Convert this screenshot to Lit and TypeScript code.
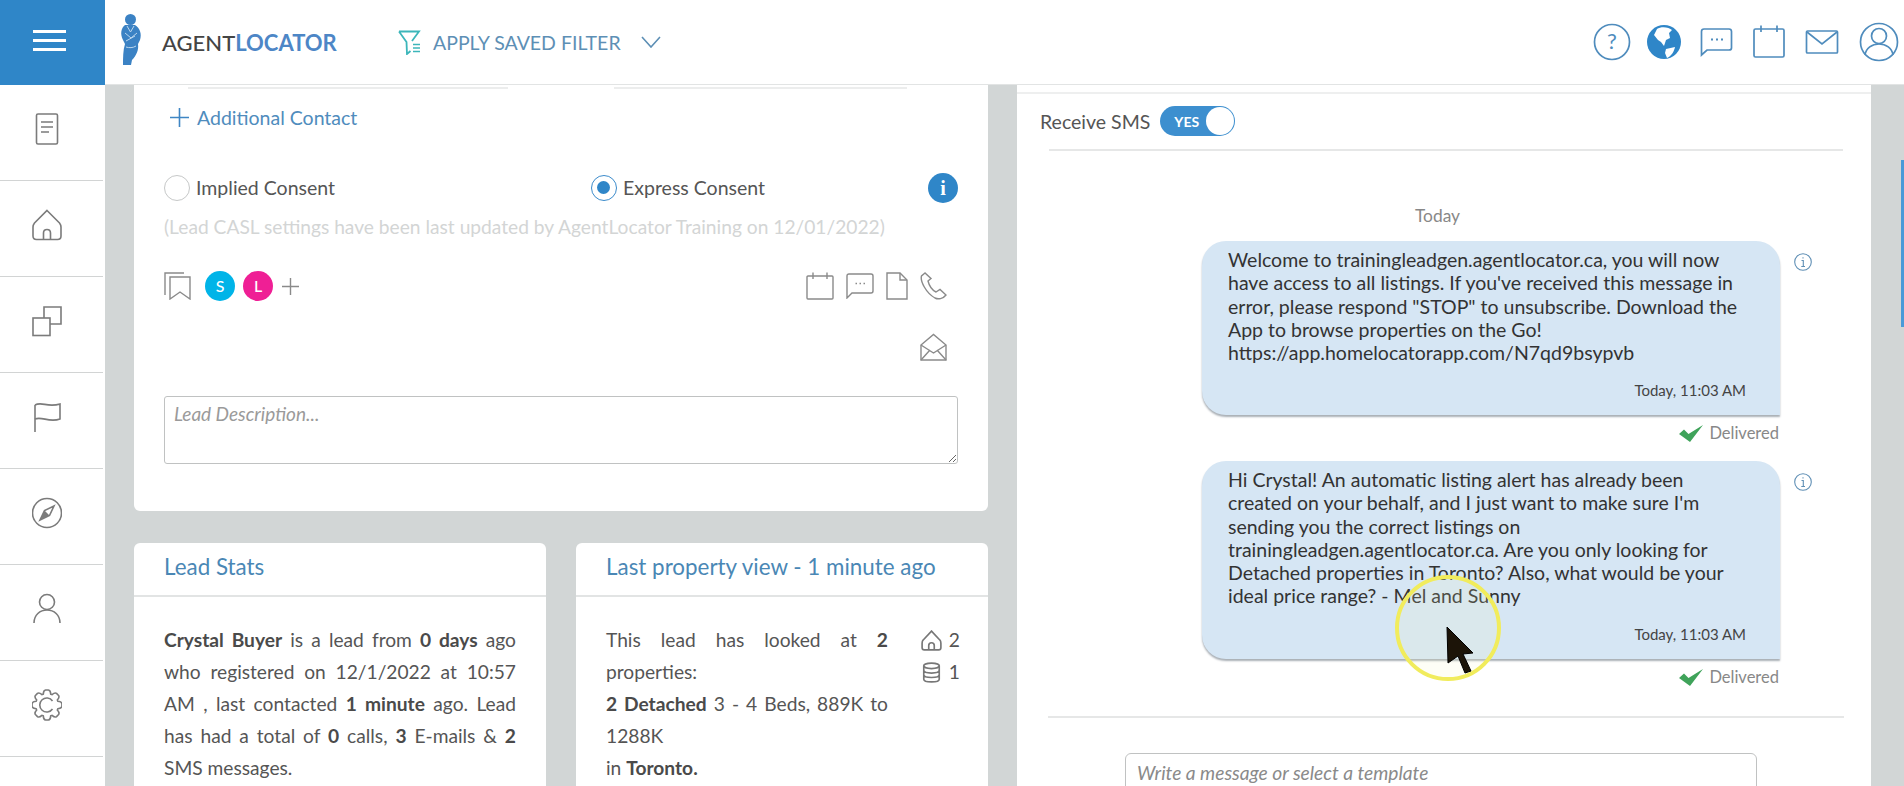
import { LitElement, html, css, svg } from "lit";
import { customElement } from "lit/decorators.js";

function gearPath(cx: number, cy: number, ro: number, ri: number, n: number) {
  const pts: string[] = [];
  const step = (Math.PI * 2) / n;
  for (let i = 0; i < n; i++) {
    const a = i * step - Math.PI / 2;
    const p = (r: number, t: number) =>
      `${(cx + r * Math.cos(a + t * step)).toFixed(2)} ${(cy + r * Math.sin(a + t * step)).toFixed(2)}`;
    pts.push(`${i === 0 ? "M" : "L"}${p(ri, -0.42)}`, `C${p(ro, -0.3)} ${p(ro, -0.2)} ${p(ro, -0.12)}`, `L${p(ro, 0.12)}`, `C${p(ro, 0.2)} ${p(ro, 0.3)} ${p(ri, 0.42)}`);
  }
  return pts.join(" ") + " Z";
}

const side = [
  svg`<svg width="30" height="32" viewBox="0 0 30 32"><rect x="4.500" y="1" width="21" height="30" rx="1.500"/><path d="M9 9h12M9 14h12M9 19h8"/></svg>`,
  svg`<svg width="30" height="32" viewBox="0 0 30 32"><path d="M15 1.500 L27.500 14 Q29 16 29 18 V27 Q29 30.500 25.500 30.500 H4.500 Q1 30.500 1 27 V18 Q1 16 2.500 14 Z"/><path d="M11.500 30.500 V24 Q11.500 20.500 15 20.500 Q18.500 20.500 18.500 24 V30.500"/></svg>`,
  svg`<svg width="30" height="32" viewBox="0 0 30 32"><rect x="1" y="13" width="17" height="17.500"/><path d="M12 13 V2 H29 V19 H18"/></svg>`,
  svg`<svg width="30" height="32" viewBox="0 0 30 32"><path d="M3 31 V4"/><path d="M3 4 C10 0 15 7 28 3 V18 C17 22 10 15 3 18"/></svg>`,
  svg`<svg width="30" height="32" viewBox="0 0 30 32"><circle cx="15" cy="16" r="14.500"/><path d="M22 9 L17.500 18.500 L8 23 L12.500 13.500 Z"/><path d="M12.500 13.500 L8 23 L17.500 18.500 Z" class="fill"/></svg>`,
  svg`<svg width="30" height="32" viewBox="0 0 30 32"><circle cx="15" cy="9" r="7.500"/><path d="M2 30 C2 22 8 17 15 17 C22 17 28 22 28 30"/></svg>`,
  svg`<svg width="30" height="32" viewBox="0 0 30 32"><path d="${gearPath(15, 16, 15, 11.5, 8)}"/><path d="M20.500 12 A7 7 0 1 0 20.500 20"/></svg>`,
];

@customElement("app-root")
export class AppRoot extends LitElement {
  static styles = css`
    :host { display: block; width: 1904px; height: 786px; overflow: hidden; position: relative; font-family: Lato, "Open Sans", sans-serif; color: #555; background: #d2d6d6; }
    * { box-sizing: border-box; }
    .shell { display: grid; grid-template-columns: 105px 1fr; grid-template-rows: 85px 1fr; height: 786px; }
    header { grid-column: 1 / 3; display: flex; align-items: center; background: #fff; border-bottom: 1px solid #e2e4e4; }
    .burger { width: 105px; height: 85px; background: #2f86c8; display: flex; flex-direction: column; gap: 6px; padding: 30px 0 0 33px; }
    .burger i { display: block; width: 33px; height: 3px; background: #fff; }
    .logo { margin-left: 15px; display: flex; align-items: center; }
    .logo svg { display: block; margin-top: -4px; }
    .brand { margin-left: 20px; font-size: 22px; font-weight: 500; color: #444; width: 236px; }
    .brand b { color: #4d86c6; font-weight: 700; }
    .filter { display: flex; align-items: center; font-size: 19.500px; color: #5d8fb5; }
    .filter span { margin: 0 20px 0 11px; }
    .top-icons { margin-left: auto; display: flex; gap: 2.600px; align-items: center; }
    .top-icons svg { display: block; fill: none; stroke: #4f8cbd; stroke-width: 1.7; }
    .top-icons svg:last-child { margin-left: 4.400px; }
    aside { background: #fff; padding-right: 2px; overflow: hidden; }
    .row { height: 96px; border-bottom: 1.500px solid #d2d4d4; display: flex; align-items: center; padding: 0 0 7px 32px; }
    .row svg { fill: none; stroke: #7b7b7b; stroke-width: 1.6; display: block; }
    .row svg .fill { fill: #7b7b7b; stroke: none; }
    main { display: grid; grid-template-columns: 854px 854px; gap: 29px; padding: 0 33px 0 29px; overflow: hidden; align-items: start; }
    .left { display: flex; flex-direction: column; gap: 32px; }
    .card { background: #fff; height: 426px; border-radius: 0 0 6px 6px; padding: 2px 30px 0; display: flex; flex-direction: column; }
    .frag { display: flex; gap: 106px; margin-left: 24px; height: 2px; }
    .frag i { display: block; height: 2px; background: #eceded; width: 320px; }
    .frag i + i { width: 293px; }
    .addl { display: flex; align-items: center; gap: 8px; height: 24px; margin: 16px 0 0 6px; font-size: 19.500px; color: #4f8cbd; }
    .addl svg { display: block; fill: none; stroke: #3f86c4; stroke-width: 1.6; }
    .radios { display: flex; align-items: center; height: 30px; margin-top: 44px; font-size: 19.500px; color: #555; }
    .radio { display: flex; align-items: center; gap: 6px; }
    .radio > span:last-child { margin-top: -2px; }
    .radio.first { width: 427px; }
    .circ { width: 26px; height: 26px; border-radius: 50%; border: 1.500px solid #c6c8c8; background: #fff; display: block; }
    .circ.on { border: 1.500px solid #3b8bcb; padding: 5px; }
    .circ.on i { display: block; width: 13px; height: 13px; border-radius: 50%; background: #2f86c8; }
    .info { margin-left: auto; width: 30px; height: 30px; border-radius: 50%; background: #2f86c8; color: #fff; font: 700 20px/30px "Liberation Serif", serif; text-align: center; }
    .casl { margin-top: 12px; height: 24px; line-height: 24px; font-size: 19.200px; color: #d3d5d5; white-space: nowrap; }
    .tools { display: flex; align-items: center; height: 30px; margin-top: 32px; }
    .tools svg, .env svg { display: block; fill: none; stroke: #8a8a8a; stroke-width: 1.4; }
    .dot { width: 30px; height: 30px; border-radius: 50%; color: #fff; text-align: center; font-size: 16px; line-height: 30px; font-weight: 500; }
    .dot.s { background: #00b4e8; margin-left: 14px; }
    .dot.l { background: #ef1f95; margin-left: 8px; }
    .more { margin-left: 9px; }
    .acts { margin-left: auto; margin-right: 11px; display: flex; gap: 12px; align-items: center; }
    .env { display: flex; justify-content: flex-end; margin: 32px 11px 0 0; height: 28px; }
    textarea { display: block; margin-top: 35px; width: 794px; height: 68px; border: 1.500px solid #c0c2c2; border-radius: 3px; padding: 5px 9px; font: italic 19px Lato, sans-serif; outline: none; background: #fff; }
    textarea::placeholder { color: #9a9a9a; opacity: 1; }
    .stats { display: grid; grid-template-columns: 412px 412px; gap: 30px; }
    .stat { background: #fff; border-radius: 6px 6px 0 0; height: 260px; }
    .stat h3 { margin: 0; height: 54px; padding-left: 30px; font-size: 22.400px; line-height: 48px; font-weight: 400; color: #4a87b5; border-bottom: 2px solid #e2e4e4; white-space: nowrap; }
    .body { padding: 27px 28px 0 30px; font-size: 19.200px; line-height: 32px; color: #555; display: flex; justify-content: space-between; }
    .body b { font-weight: 700; color: #4a4a4a; }
    .line { text-align: justify; text-align-last: justify; white-space: nowrap; }
    .line.end { text-align-last: left; }
    .para { width: 352px; }
    .para.short { width: 282px; }
    .counts { display: grid; grid-template-columns: auto auto; column-gap: 7px; height: 64px; }
    .counts svg { display: block; fill: none; stroke: #777; stroke-width: 1.5; margin-top: 6px; }
    .right { background: #fff; height: 701px; position: relative; padding-top: 7px; }
    .faint { height: 2px; background: #eeefef; }
    .sms { display: flex; align-items: center; height: 30px; margin: 12px 0 0 23px; font-size: 19.500px; color: #555; gap: 10px; }
    .toggle { width: 75px; height: 30px; border-radius: 15px; background: #3d8fcf; display: flex; align-items: center; justify-content: space-between; padding: 0 1px 0 14px; color: #fff; font-size: 14px; font-weight: 700; }
    .toggle i { display: block; width: 28px; height: 28px; border-radius: 50%; background: #fff; }
    .rule { height: 2px; background: #e6e7e7; }
    .rule.a { margin: 13px 28px 0 32px; }
    .rule.b { margin: 26px 27px 0 31px; }
    .today { text-align: center; font-size: 17.400px; color: #888; line-height: 20px; margin: 55px 0 15px; width: 841px; }
    .msg { display: flex; justify-content: flex-end; align-items: flex-start; gap: 14px; padding-right: 59px; }
    .msg svg { display: block; margin-top: 12px; fill: none; stroke: #5f8fb5; stroke-width: 1.1; }
    .bubble { width: 578px; background: #d6e6f4; border-radius: 24px 24px 0 24px; box-shadow: 0 2px 2px #a9afb5; padding: 7px 26px 0; font-size: 19.500px; line-height: 23.300px; color: #333; white-space: nowrap; }
    .bubble.one { height: 174px; }
    .bubble.two { height: 198px; }
    .time { text-align: right; font-size: 15px; line-height: 20px; margin: 16px 8px 0 0; color: #444; }
    .dlv { display: flex; justify-content: flex-end; align-items: center; gap: 6px; height: 26px; margin: 5px 92px 15px 0; font-size: 16.500px; color: #888; }
    .dlv svg { display: block; }
    .input { margin: 35px 114px 0 108px; height: 60px; border: 1.500px solid #c0c2c2; border-radius: 6px 6px 0 0; padding: 7px 11px; font-style: italic; font-size: 19.200px; color: #8a8a8a; white-space: nowrap; }
    .thumb { position: absolute; left: 1901px; top: 160px; width: 3px; height: 167px; background: #4a9ad8; }
    .ring { position: absolute; left: 1395px; top: 575px; width: 106px; height: 106px; border-radius: 50%; border: 4px solid #f1ec5c; background: rgba(250, 248, 190, 0.14); }
    .arrow { position: absolute; left: 1444px; top: 625px; display: block; }
  `;

  private infoIcon() {
    return svg`<svg width="18" height="18" viewBox="0 0 18 18"><circle cx="9" cy="9" r="8.300"/><path d="M7.500 7.500H9.300V13.500M7.300 13.500H11M9 4.300V5.500"/></svg>`;
  }

  private check() {
    return svg`<svg width="24" height="17" viewBox="0 0 24 17"><path d="M0 9 L5 4.500 L9.500 9 L24 0 L11 17 Z" fill="#3fa35a"/></svg>`;
  }

  render() {
    return html`
      <div class="shell">
        <header>
          <div class="burger"><i></i><i></i><i></i></div>
          <div class="logo">
            <svg width="22" height="52" viewBox="0 0 22 52">
              <circle cx="10.500" cy="5.500" r="5.500" fill="#3b82c4"/>
              <path d="M5 11 L15 11 C20 14 22 20 20 26 L18 30 C19 36 16 42 12 46 L11 51 H3 C3 44 3 36 5 30 L3 26 C0 20 1 14 5 11 Z" fill="#3b82c4"/>
              <path d="M7 12 L10.500 18 L14 12 M5 19 L11 24 L17 19 M6 27 L15 22 M6 33 C9 34 13 34 16 32" fill="none" stroke="#bcd7ee" stroke-width="1"/>
            </svg>
            <div class="brand">AGENT<b>LOCATOR</b></div>
          </div>
          <div class="filter">
            <svg width="24" height="25" viewBox="0 0 24 25" fill="none" stroke="#3cb6ba" stroke-width="1.800" style="display:block"><path d="M1 1.500 H21 L14 11 M1 1.500 L8.500 12 L9 24 L12.500 21"/><path d="M15 14.500H22M15 18H22M15 21.500H22" stroke-width="1.600"/></svg>
            <span>APPLY SAVED FILTER</span>
            <svg width="20" height="12" viewBox="0 0 20 12" fill="none" stroke="#5d8fb5" stroke-width="1.600" style="display:block"><path d="M1 1 L10 11 L19 1"/></svg>
          </div>
          <div class="top-icons">
            <svg width="50" height="40" viewBox="0 0 50 40"><circle cx="25" cy="20" r="17.500"/><text x="25" y="27" text-anchor="middle" font-size="22" fill="#4f8cbd" stroke="none" font-family="Lato">?</text></svg>
            <svg width="50" height="40" viewBox="0 0 50 40"><circle cx="25" cy="20" r="17" fill="#2f86c8" stroke="none"/><path d="M18 7 C22 4 30 5 33 8 L30 11 L31 16 L27 18 L25 24 L22 20 L19 18 L15 13 Z" fill="#fff" stroke="none"/><path d="M27 27 L36 25 C35 30 32 34 28 36 L26 31 Z" fill="#fff" stroke="none"/></svg>
            <svg width="50" height="40" viewBox="0 0 50 40"><path d="M12 7 H37 Q39.500 7 39.500 9.500 V26 Q39.500 28 37 28 H15 L9.500 33 V9.500 Q9.500 7 12 7 Z"/><path d="M19 17.500h2M24 17.500h2M29 17.500h2" stroke-width="2"/></svg>
            <svg width="50" height="40" viewBox="0 0 50 40"><rect x="10" y="7" width="30" height="28" rx="1.500"/><path d="M17 3.500V10M33 3.500V10"/></svg>
            <svg width="50" height="40" viewBox="0 0 50 40"><rect x="9.500" y="9" width="31" height="22" rx="1"/><path d="M10 10 L25 22 L40 10"/></svg>
            <svg width="50" height="40" viewBox="0 0 50 40"><circle cx="25" cy="20" r="18.500"/><circle cx="25" cy="14" r="7.500"/><path d="M11 33 C12 26 18 22 25 22 C32 22 38 26 39 33"/></svg>
          </div>
        </header>
        <aside>${side.map((s) => html`<div class="row">${s}</div>`)}</aside>
        <main>
          <div class="left">
            <section class="card">
              <div class="frag"><i></i><i></i></div>
              <div class="addl">
                <svg width="19" height="19" viewBox="0 0 19 19"><path d="M9.500 0V19M0 9.500H19"/></svg>
                <span>Additional Contact</span>
              </div>
              <div class="radios">
                <div class="radio first"><span class="circ"></span><span>Implied Consent</span></div>
                <div class="radio"><span class="circ on"><i></i></span><span>Express Consent</span></div>
                <div class="info">i</div>
              </div>
              <div class="casl">(Lead CASL settings have been last updated by AgentLocator Training on 12/01/2022)</div>
              <div class="tools">
                <svg width="27" height="28" viewBox="0 0 27 28"><path d="M1 23 V1 H20"/><path d="M6 5 H26 V27 L16 20 L6 27 Z"/></svg>
                <div class="dot s">S</div>
                <div class="dot l">L</div>
                <svg class="more" width="17" height="17" viewBox="0 0 17 17"><path d="M8.500 0V17M0 8.500H17"/></svg>
                <div class="acts">
                  <svg width="28" height="28" viewBox="0 0 28 28"><rect x="1" y="4" width="26" height="23" rx="1"/><path d="M7 0.500V7M21 0.500V7"/></svg>
                  <svg width="28" height="26" viewBox="0 0 28 26"><path d="M3 1 H25 Q27 1 27 3 V18 Q27 20 25 20 H6 L1 25 V3 Q1 1 3 1 Z"/><path d="M9.500 10.500h1.500M13.500 10.500h1.500M17.500 10.500h1.500" stroke-width="1.600"/></svg>
                  <svg width="22" height="28" viewBox="0 0 22 28"><path d="M1 1 H14 L21 8 V27 H1 Z"/><path d="M14 1 V8 H21"/></svg>
                  <svg width="27" height="28" viewBox="0 0 27 28"><path d="M5 1 L1.500 4 C0 9 6 21 15 26 C18 27.500 23 27 26 23 L20 17.500 L16 20 C12 18 9 13 8 9 L11 6.500 Z"/></svg>
                </div>
              </div>
              <div class="env">
                <svg width="27" height="28" viewBox="0 0 27 28"><path d="M1 12 L13.500 1.500 L26 12 V27 H1 Z"/><path d="M1 12 L13.500 20 L26 12M1 27 L10 17M26 27 L17 17"/></svg>
              </div>
              <textarea placeholder="Lead Description..."></textarea>
            </section>
            <div class="stats">
              <section class="stat">
                <h3>Lead Stats</h3>
                <div class="body">
                  <div class="para">
                    <div class="line"><b>Crystal Buyer</b> is a lead from <b>0 days</b> ago</div>
                    <div class="line">who registered on 12/1/2022 at 10:57</div>
                    <div class="line">AM , last contacted <b>1 minute</b> ago. Lead</div>
                    <div class="line">has had a total of <b>0</b> calls, <b>3</b> E-mails &amp; <b>2</b></div>
                    <div class="line end">SMS messages.</div>
                  </div>
                </div>
              </section>
              <section class="stat">
                <h3>Last property view - 1 minute ago</h3>
                <div class="body">
                  <div class="para short">
                    <div class="line">This lead has looked at <b>2</b></div>
                    <div class="line end">properties:</div>
                    <div class="line"><b>2 Detached</b> 3 - 4 Beds, 889K to</div>
                    <div class="line end">1288K</div>
                    <div class="line end">in <b>Toronto.</b></div>
                  </div>
                  <div class="counts">
                    <svg width="21" height="21" viewBox="0 0 19 19"><path d="M9.500 1 L17 9 Q18 10 18 12 V16 Q18 18 16 18 H3 Q1 18 1 16 V12 Q1 10 2 9 Z"/><path d="M7 18 V14 Q7 11.500 9.500 11.500 Q12 11.500 12 14 V18"/></svg>
                    <span>2</span>
                    <svg width="21" height="21" viewBox="0 0 19 19"><ellipse cx="9.500" cy="3.500" rx="7" ry="2.500"/><path d="M2.500 3.500V15.500C2.500 17 5.500 18 9.500 18S16.500 17 16.500 15.500V3.500M2.500 7.500C2.500 9 5.500 10 9.500 10S16.500 9 16.500 7.500M2.500 11.500C2.500 13 5.500 14 9.500 14S16.500 13 16.500 11.500"/></svg>
                    <span>1</span>
                  </div>
                </div>
              </section>
            </div>
          </div>
          <section class="right">
            <div class="faint"></div>
            <div class="sms"><span>Receive SMS</span><div class="toggle"><span>YES</span><i></i></div></div>
            <div class="rule a"></div>
            <div class="today">Today</div>
            <div class="msg">
              <div class="bubble one">
                Welcome to trainingleadgen.agentlocator.ca, you will now<br>
                have access to all listings. If you've received this message in<br>
                error, please respond "STOP" to unsubscribe. Download the<br>
                App to browse properties on the Go!<br>
                https://app.homelocatorapp.com/N7qd9bsypvb
                <div class="time">Today, 11:03 AM</div>
              </div>
              ${this.infoIcon()}
            </div>
            <div class="dlv">${this.check()}<span>Delivered</span></div>
            <div class="msg">
              <div class="bubble two">
                Hi Crystal! An automatic listing alert has already been<br>
                created on your behalf, and I just want to make sure I'm<br>
                sending you the correct listings on<br>
                trainingleadgen.agentlocator.ca. Are you only looking for<br>
                Detached properties in Toronto? Also, what would be your<br>
                ideal price range? - Mel and Sunny
                <div class="time">Today, 11:03 AM</div>
              </div>
              ${this.infoIcon()}
            </div>
            <div class="dlv">${this.check()}<span>Delivered</span></div>
            <div class="rule b"></div>
            <div class="input">Write a message or select a template</div>
          </section>
        </main>
      </div>
      <div class="thumb"></div>
      <div class="ring"></div>
      <svg class="arrow" width="34" height="50" viewBox="0 0 34 50"><path d="M3 2 L29 28 L19 29 L27 46 L21 48 L14 31 L4 38 Z" fill="#1c1408" stroke="#000" stroke-width="1"/></svg>
    `;
  }
}
